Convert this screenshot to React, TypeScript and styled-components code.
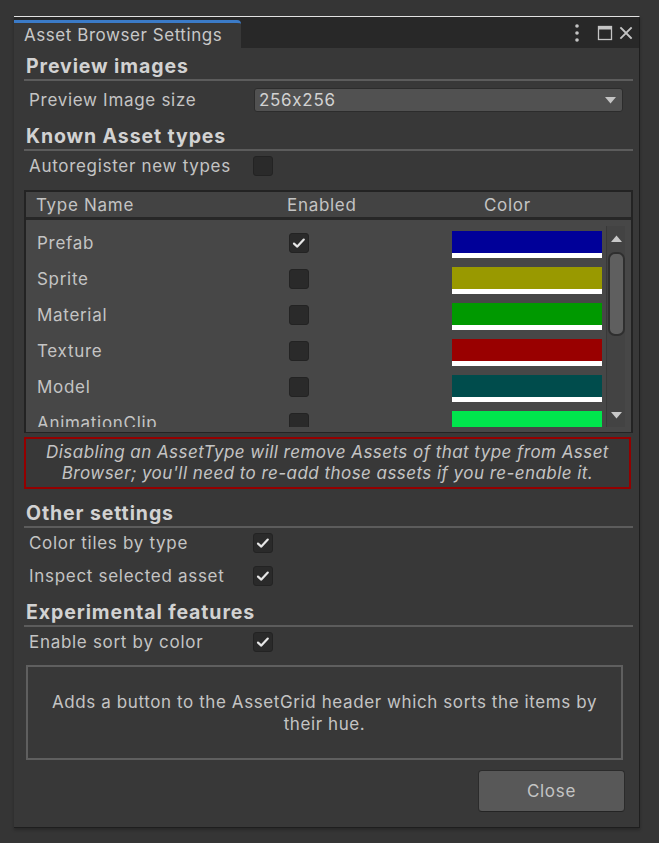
import React from 'react';
import styled, { createGlobalStyle } from 'styled-components';

const Global = createGlobalStyle`
  html, body { margin: 0; padding: 0; background: #353535; }
  body { font-family: Inter, "Noto Sans", sans-serif; font-feature-settings: "calt" 0; }
  * { box-sizing: border-box; }
`;

const Page = styled.div`
  padding: 16px 0 0 14px;
  height: 843px;
`;

const Window = styled.div`
  width: 626px;
  height: 812px;
  background: #383838;
  border-top: 1px solid #e2e2e2;
  border-right: 1px solid #1e1e1e;
  border-bottom: 1px solid #1e1e1e;
  box-shadow: 0 2px 3px rgba(0, 0, 0, 0.25);
  display: flex;
  flex-direction: column;
`;

const TabBar = styled.div`
  height: 31px;
  background: #282828;
  display: flex;
  align-items: flex-end;
  flex-shrink: 0;
`;

const Tab = styled.div`
  width: 227px;
  height: 28px;
  background: #383838;
  border-top: 3px solid #3b7bc8;
  border-top-right-radius: 4px;
  color: #c8c8c8;
  font-size: 17px;
  letter-spacing: 0.55px;
  line-height: 25px;
  padding-left: 10px;
  white-space: nowrap;
`;

const TabIcons = styled.div`
  margin-left: auto;
  align-self: center;
  display: flex;
  align-items: center;
  gap: 6px;
  padding-right: 6px;
  color: #c4c4c4;
`;

const Content = styled.div`
  flex: 1;
  padding: 0 6px 0 10px;
  display: flex;
  flex-direction: column;
`;

const SectionHeader = styled.div<{ $mt: number }>`
  margin-top: ${(p) => p.$mt}px;
  height: 28px;
  line-height: 26px;
  padding-left: 2px;
  border-bottom: 2px solid #5c5c5c;
  font-weight: 700;
  font-size: 19.5px;
  letter-spacing: 0.9px;
  color: #d2d2d2;
  white-space: nowrap;
`;

const FieldRow = styled.div<{ $mt?: number }>`
  margin-top: ${(p) => p.$mt ?? 0}px;
  height: 30px;
  display: flex;
  align-items: center;
  padding-left: 5px;
`;

const Label = styled.div`
  width: 224px;
  font-size: 17px;
  letter-spacing: 0.7px;
  color: #c4c4c4;
  white-space: nowrap;
`;

const Dropdown = styled.div`
  margin-left: 1px;
  width: 369px;
  height: 24px;
  background: #515151;
  border: 1px solid #2c2c2c;
  border-radius: 3px;
  display: flex;
  align-items: center;
  justify-content: space-between;
  padding: 0 6px 0 4px;
  font-size: 17px;
  letter-spacing: 0.7px;
  color: #d2d2d2;
`;

const CheckBox = styled.div`
  width: 20px;
  height: 20px;
  flex-shrink: 0;
  background: #2a2a2a;
  border: 1px solid #232323;
  border-radius: 3px;
  display: flex;
  align-items: center;
  justify-content: center;
`;

const Table = styled.div`
  margin-top: 9px;
  border: 2px solid #232323;
  height: 243px;
  display: flex;
  flex-direction: column;
`;

const TableHead = styled.div`
  height: 28px;
  flex-shrink: 0;
  background: #434343;
  border-bottom: 3px solid #272727;
  display: flex;
  align-items: center;
  padding-left: 10px;
  font-size: 17px;
  letter-spacing: 0.7px;
  color: #c4c4c4;
`;

const HeadCell = styled.div<{ $w?: number }>`
  width: ${(p) => (p.$w ? `${p.$w}px` : 'auto')};
  flex-shrink: 0;
  white-space: nowrap;
`;

const TableBody = styled.div`
  flex: 1;
  background: #474747;
  padding: 5px 6px 5px 0;
  display: flex;
`;

const Viewport = styled.div`
  flex: 1;
  height: 202px;
  overflow: hidden;
`;

const TypeRow = styled.div`
  height: 36px;
  display: flex;
  align-items: center;
  padding-left: 11px;
`;

const TypeName = styled.div`
  width: 252px;
  font-size: 17px;
  letter-spacing: 0.7px;
  color: #c4c4c4;
  white-space: nowrap;
`;

const CheckCell = styled.div`
  width: 163px;
  display: flex;
`;

const Swatch = styled.div<{ $c: string }>`
  width: 150px;
  height: 27px;
  margin-top: 3px;
  background: ${(p) => p.$c};
  border-bottom: 5px solid #ffffff;
`;

const ScrollBar = styled.div`
  width: 19px;
  margin-top: 1px;
  height: 201px;
  border-left: 1px solid #393939;
  background: #434343;
  display: flex;
  flex-direction: column;
  align-items: center;
`;

const ScrollArrow = styled.div`
  height: 24px;
  width: 100%;
  display: flex;
  align-items: center;
  justify-content: center;
`;

const ScrollThumb = styled.div`
  width: 17px;
  height: 84px;
  margin-top: 2px;
  background: #5f5f5f;
  border: 2px solid #2f2f2f;
  border-radius: 7px;
`;

const ScrollSpacer = styled.div`
  flex: 1;
`;

const Warning = styled.div`
  margin-top: 4px;
  margin-right: 2px;
  border: 2px solid #930000;
  padding: 3px 6px;
  font-size: 17px;
  letter-spacing: 0.45px;
  font-style: italic;
  line-height: 21px;
  text-align: center;
  color: #c4c4c4;
`;

const HelpBox = styled.div`
  margin: 8px 10px 0 2px;
  height: 95px;
  border: 2px solid #5f5f5f;
  display: flex;
  align-items: center;
  justify-content: center;
  padding: 0 16px;
  font-size: 17px;
  letter-spacing: 0.6px;
  line-height: 22px;
  text-align: center;
  color: #c4c4c4;
`;

const CloseButton = styled.div`
  margin-top: 10px;
  margin-right: 8px;
  align-self: flex-end;
  width: 147px;
  height: 42px;
  background: #585858;
  border: 1px solid #2b2b2b;
  border-bottom-color: #242424;
  border-radius: 4px;
  display: flex;
  align-items: center;
  justify-content: center;
  font-size: 17px;
  letter-spacing: 0.7px;
  color: #c4c4c4;
`;

const Check = () => (
  <svg width="14" height="14" viewBox="0 0 14 14">
    <polyline points="2,7.6 5.3,10.6 11.8,3.6" fill="none" stroke="#e6e6e6" strokeWidth="2.2" strokeLinecap="round" strokeLinejoin="round" />
  </svg>
);

const Box = ({ checked }: { checked?: boolean }) => <CheckBox>{checked && <Check />}</CheckBox>;

const types: { name: string; color: string; checked?: boolean }[] = [
  { name: 'Prefab', color: '#000099', checked: true },
  { name: 'Sprite', color: '#999900' },
  { name: 'Material', color: '#009900' },
  { name: 'Texture', color: '#990000' },
  { name: 'Model', color: '#004c4c' },
  { name: 'AnimationClip', color: '#00e64d' },
];

export default function App() {
  return (
    <>
      <Global />
      <Page>
        <Window>
          <TabBar>
            <Tab>Asset Browser Settings</Tab>
            <TabIcons>
              <svg width="8" height="20" viewBox="0 0 8 20">
                <circle cx="4" cy="3" r="1.8" fill="#c4c4c4" />
                <circle cx="4" cy="10" r="1.8" fill="#c4c4c4" />
                <circle cx="4" cy="17" r="1.8" fill="#c4c4c4" />
              </svg>
              <svg width="16" height="16" viewBox="0 0 16 16" style={{ marginLeft: 10 }}>
                <rect x="1.5" y="1.5" width="13" height="13" fill="none" stroke="#c4c4c4" strokeWidth="1.3" />
                <rect x="1.5" y="1.5" width="13" height="3" fill="#c4c4c4" />
              </svg>
              <svg width="14" height="14" viewBox="0 0 14 14">
                <path d="M2 2 L12 12 M12 2 L2 12" stroke="#c4c4c4" strokeWidth="1.8" strokeLinecap="square" />
              </svg>
            </TabIcons>
          </TabBar>
          <Content>
            <SectionHeader $mt={5}>Preview images</SectionHeader>
            <FieldRow $mt={4}>
              <Label>Preview Image size</Label>
              <Dropdown>
                <span>256x256</span>
                <svg width="11" height="7" viewBox="0 0 11 7">
                  <polygon points="0,0 11,0 5.5,6.5" fill="#c4c4c4" />
                </svg>
              </Dropdown>
            </FieldRow>

            <SectionHeader $mt={8}>Known Asset types</SectionHeader>
            <FieldRow>
              <Label>Autoregister new types</Label>
              <Box />
            </FieldRow>

            <Table>
              <TableHead>
                <HeadCell $w={251}>Type Name</HeadCell>
                <HeadCell $w={197}>Enabled</HeadCell>
                <HeadCell>Color</HeadCell>
              </TableHead>
              <TableBody>
                <Viewport>
                  {types.map((t) => (
                    <TypeRow key={t.name}>
                      <TypeName>{t.name}</TypeName>
                      <CheckCell>
                        <Box checked={t.checked} />
                      </CheckCell>
                      <Swatch $c={t.color} />
                    </TypeRow>
                  ))}
                </Viewport>
                <ScrollBar>
                  <ScrollArrow>
                    <svg width="11" height="7" viewBox="0 0 11 7">
                      <polygon points="0,7 11,7 5.5,0.5" fill="#c8c8c8" />
                    </svg>
                  </ScrollArrow>
                  <ScrollThumb />
                  <ScrollSpacer />
                  <ScrollArrow>
                    <svg width="11" height="7" viewBox="0 0 11 7">
                      <polygon points="0,0 11,0 5.5,6.5" fill="#c8c8c8" />
                    </svg>
                  </ScrollArrow>
                </ScrollBar>
              </TableBody>
            </Table>

            <Warning>
              Disabling an AssetType will remove Assets of that type from Asset Browser; you'll need to re-add those assets if you re-enable it.
            </Warning>

            <SectionHeader $mt={11}>Other settings</SectionHeader>
            <FieldRow>
              <Label>Color tiles by type</Label>
              <Box checked />
            </FieldRow>
            <FieldRow $mt={3}>
              <Label>Inspect selected asset</Label>
              <Box checked />
            </FieldRow>

            <SectionHeader $mt={8}>Experimental features</SectionHeader>
            <FieldRow>
              <Label>Enable sort by color</Label>
              <Box checked />
            </FieldRow>

            <HelpBox>Adds a button to the AssetGrid header which sorts the items by their hue.</HelpBox>

            <CloseButton>Close</CloseButton>
          </Content>
        </Window>
      </Page>
    </>
  );
}
